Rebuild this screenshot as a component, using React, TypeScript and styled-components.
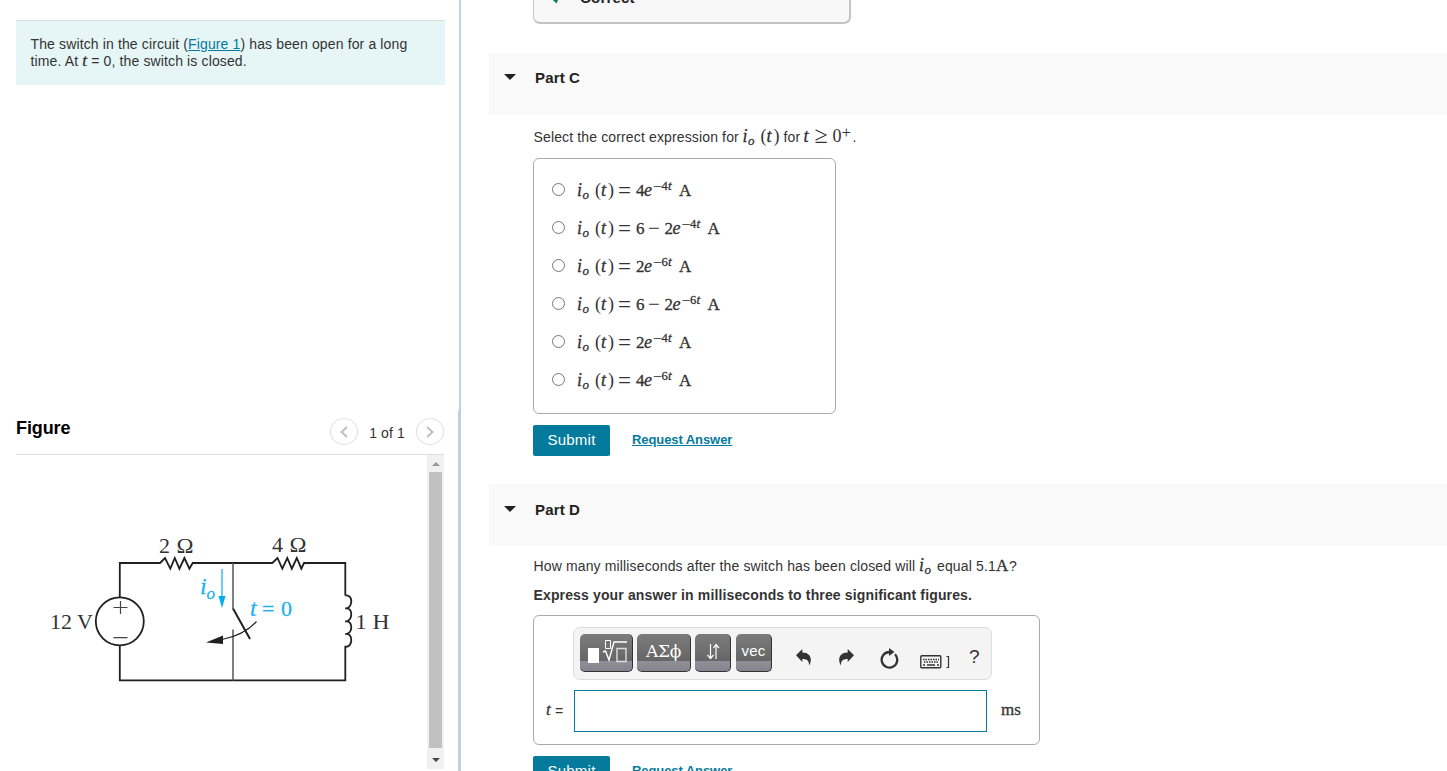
import { Fragment } from "react";
import { createGlobalStyle, styled } from "styled-components";

const GlobalStyle = createGlobalStyle`
  html,
  body {
    margin: 0;
    height: 771px;
    overflow: hidden;
    background: #fff;
  }
  * {
    box-sizing: border-box;
  }
`;

const Page = styled.div`
  display: flex;
  width: 1447px;
  height: 771px;
  overflow: hidden;
  font-family: "Liberation Sans", Arial, sans-serif;
  font-size: 14px;
  line-height: 17px;
  color: #333;
`;

const Left = styled.div`
  width: 461px;
  flex: none;
  display: flex;
  flex-direction: column;
`;

const IntroPane = styled.div`
  height: 411px;
  padding: 20px 14px 0 16px;
  border-right: 2px solid #bfcfde;
`;

const Intro = styled.div`
  height: 65px;
  padding: 15px 14px 0 14.5px;
  background: #e6f6f6;
  border-top: 1px solid #ddd;
  letter-spacing: 0.13px;
  white-space: nowrap;
`;

const Link = styled.a<{ $bold?: boolean }>`
  color: #047a9c;
  text-decoration: underline;
  font-weight: ${(p) => (p.$bold ? "bold" : "normal")};
`;

const FigurePane = styled.div`
  height: 360px;
  padding: 0 14px 0 16px;
  border-right: 3px solid #bfcfde;
`;

const FigureHeader = styled.div`
  display: flex;
  align-items: flex-start;
  height: 44px;
  border-bottom: 1px solid #ddd;
`;

const FigureTitle = styled.h2`
  flex: 1;
  margin: 7px 0 0;
  font-size: 18px;
  line-height: 20px;
  letter-spacing: -0.1px;
  color: #000;
`;

const Pager = styled.div`
  display: flex;
  align-items: center;
  margin-top: 7px;
`;

const PagerButton = styled.button`
  display: flex;
  align-items: center;
  justify-content: center;
  width: 28px;
  height: 27px;
  padding: 0 1px 0 0;
  border: 1px solid #e2e2e2;
  border-radius: 50%;
  background: #fff;
`;

const PagerText = styled.span`
  width: 58px;
  padding-top: 3px;
  text-align: center;
  letter-spacing: 0.1px;
`;

const FigureBody = styled.div`
  display: flex;
  height: 314px;
`;

const ScrollTrack = styled.div`
  display: flex;
  flex-direction: column;
  align-items: center;
  width: 17px;
  background: #f1f1f1;
`;

const ScrollThumb = styled.div`
  width: 13px;
  height: 276px;
  background: #c1c1c1;
`;

const ScrollArrow = styled.div<{ $down?: boolean }>`
  display: flex;
  align-items: center;
  justify-content: center;
  height: ${(p) => (p.$down ? 21 : 17)}px;
  padding-top: ${(p) => (p.$down ? 3 : 1)}px;
`;

const Right = styled.div`
  flex: 1;
  padding-left: 28px;
`;

const Correct = styled.div`
  display: flex;
  gap: 19px;
  align-items: flex-end;
  width: 318px;
  height: 24px;
  margin-left: 44px;
  padding: 0 0 16px 17px;
  border: solid #c4c4c4;
  border-width: 0 2px 2px 1px;
  border-radius: 0 0 7px 7px;
  background: #f8f8f8;
  font-size: 15px;
  font-weight: bold;
  letter-spacing: 0.2px;
  color: #222;
`;

const CheckMark = styled.svg`
  margin-bottom: 2px;
`;

const PartHeader = styled.div<{ $top: number }>`
  display: flex;
  align-items: flex-start;
  gap: 19px;
  height: 62px;
  margin-top: ${(p) => p.$top}px;
  padding: 16px 0 0 15px;
  background: #f9f9f9;
  font-size: 15px;
  font-weight: bold;
  letter-spacing: 0.15px;
  color: #222;
`;

const PartD = styled(PartHeader)`
  padding-top: 17px;
`;

const Caret = styled.span`
  margin-top: 5px;
  border: solid transparent;
  border-width: 6px 6px 0;
  border-top-color: #222;
`;

const Content = styled.div`
  padding-left: 44px;
`;

const Prompt = styled.div<{ $top: number }>`
  display: flex;
  align-items: baseline;
  height: 17px;
  margin-top: ${(p) => p.$top}px;
  padding-left: 0.5px;
  white-space: pre;
`;

const Run = styled.span<{ $w?: number; $bold?: boolean }>`
  width: ${(p) => (p.$w ? `${p.$w}px` : "auto")};
  font-weight: ${(p) => (p.$bold ? "bold" : "normal")};
  letter-spacing: 0.14px;
`;

/* line-height 0 keeps tall math symbols from moving the baseline */
const Glyph = styled.span<{ $w: number; $size?: number; $up?: number; $it?: boolean; $thin?: boolean }>`
  display: inline-block;
  flex: none;
  position: relative;
  bottom: ${(p) => p.$up ?? 0}px;
  width: ${(p) => p.$w}px;
  font-family: "Liberation Serif", "Times New Roman", serif;
  font-size: ${(p) => p.$size ?? 17}px;
  font-style: ${(p) => (p.$it ? "italic" : "normal")};
  letter-spacing: 0;
  line-height: 0;
  -webkit-text-stroke: ${(p) => (p.$thin ? 0 : 0.3)}px currentColor;
`;

const Choices = styled.div`
  display: flex;
  flex-direction: column;
  width: 303px;
  height: 256px;
  margin-top: 12px;
  padding: 12px 18px 0;
  border: 1px solid #aaa;
  border-radius: 6px;
`;

const Choice = styled.label`
  display: flex;
  align-items: center;
  height: 38px;
`;

const Radio = styled.input`
  width: 13px;
  height: 13px;
  margin: 0 12px 2px 0;
`;

const Equation = styled.span`
  display: flex;
  align-items: baseline;
  white-space: pre;
  height: 17px;
  padding-top: 1px;
  &::before {
    content: "\\200b";
    line-height: 17px;
  }
`;

const Actions = styled.div`
  display: flex;
  align-items: center;
  gap: 22px;
  margin-top: 11px;
  height: 31px;
`;

const Submit = styled.button`
  width: 77px;
  height: 31px;
  padding: 0 0 2px;
  border: 0;
  border-radius: 2px;
  background: #047a9c;
  color: #fff;
  font: 15px "Liberation Sans", Arial, sans-serif;
  letter-spacing: 0.25px;
`;

const Request = styled(Link)`
  margin-bottom: 2px;
  font-size: 13px;
  letter-spacing: -0.08px;
`;

const Editor = styled.div`
  width: 507px;
  height: 130px;
  margin-top: 11px;
  padding: 11px 16px 0 12px;
  border: 1px solid #aaa;
  border-radius: 6px;
`;

const Toolbar = styled.div`
  display: flex;
  align-items: center;
  width: 419px;
  height: 53px;
  margin-left: 27px;
  padding: 0 0 2px 6px;
  border: 1px solid #ddd;
  border-radius: 7px;
  background: #f4f4f4;
`;

const PaletteButton = styled.button<{ $w: number; $gap?: number; $sans?: boolean }>`
  display: flex;
  align-items: center;
  justify-content: center;
  width: ${(p) => p.$w}px;
  height: 38px;
  margin-right: ${(p) => p.$gap ?? 4}px;
  padding: ${(p) => (p.$sans ? "0 0 4px" : "0 0 2px")};
  border: 1px solid #333;
  border-width: 0 1px 1px 0;
  border-radius: 5px;
  background: linear-gradient(#7c7c7c, #666 72%, #908f99 73%, #85848d);
  color: #fff;
  font-family: ${(p) => (p.$sans ? '"Liberation Sans", sans-serif' : '"DejaVu Serif", serif')};
  font-size: ${(p) => (p.$sans ? 15 : 17)}px;
  letter-spacing: ${(p) => (p.$sans ? 0.3 : -0.3)}px;
`;

const IconGroup = styled.div`
  display: flex;
  align-items: flex-end;
  gap: 27px;
  padding-top: 11px;
`;

const IconSlot = styled.span<{ $raise?: number; $nudge?: number }>`
  display: flex;
  margin: 0 0 ${(p) => p.$raise ?? 0}px ${(p) => p.$nudge ?? 0}px;
`;

const Help = styled.span`
  margin: 8px 0 0 19px;
  font-size: 19px;
`;

const AnswerRow = styled.div`
  display: flex;
  align-items: center;
  margin-top: 10px;
`;

const AnswerInput = styled.input`
  width: 413px;
  height: 42px;
  margin-right: 14px;
  border: 1px solid #047a9c;
  outline: none;
`;

const choices = [
  { lead: "", coef: "4", rate: "4" },
  { lead: "6", coef: "2", rate: "4" },
  { lead: "", coef: "2", rate: "6" },
  { lead: "6", coef: "2", rate: "6" },
  { lead: "", coef: "2", rate: "4" },
  { lead: "", coef: "4", rate: "6" },
];

const Io = () => (
  <>
    <Glyph $w={5.5} $size={18} $it>i</Glyph>
    <Glyph $w={12.5} $size={13} $up={-3} $it>o</Glyph>
  </>
);

const OfT = () => (
  <>
    <Glyph $w={6} $size={18} $thin>(</Glyph>
    <Glyph $w={7} $size={18} $it>t</Glyph>
    <Glyph $w={10} $size={18} $thin>)</Glyph>
  </>
);

const Circuit = () => (
  <svg width="411" height="314" viewBox="16 455 411 314" fill="none" stroke="#231f20">
    <g strokeWidth="1.8">
      <path d="M119.8 597V563H160l1-1 4-4 5.3 10.7 4.5-10.7 4.6 10.7 5-10.7 5 10.7 3.3-5.7H272.3l5.2-5 4.8 10.7 5-10.7 4.5 10.7 5-10.7 4.5 10.7 2.7-5.7h41.3v32.5" />
      <path d="M345.3 595.5c8-1.5 8 13 0 13c8-2 8 13 0 13c8-2 8 13 0 12.6c8-2 8 13.5 0 12.6V680.3H119.8V646" />
      <circle cx="119.8" cy="621.3" r="24" />
      <path d="M233 608.5L250 639" strokeWidth="2" />
    </g>
    <path d="M233 563v46M233 629.5v51" stroke="#555" strokeWidth="1.5" />
    <path d="M113.5 607.5h14M120.5 601v13M113.5 637.7h14" stroke="#444" strokeWidth="1.2" />
    <path d="M256.5 621.5Q244 635 222 639.5" strokeWidth="1.2" />
    <path d="M206 642.5l17-7v8.5z" fill="#231f20" stroke="none" />
    <path d="M222 569v30" stroke="#5bc8f5" strokeWidth="1.8" />
    <path d="M218.5 596h7L222 608z" fill="#00aeef" stroke="none" />
    <g stroke="none" fill="#333" fontFamily="Liberation Serif" fontSize="22">
      <text x="159" y="553">2</text>
      <text x="176.5" y="553" textLength="17" lengthAdjust="spacingAndGlyphs">Ω</text>
      <text x="272" y="552">4</text>
      <text x="289.5" y="552" textLength="17" lengthAdjust="spacingAndGlyphs">Ω</text>
      <text x="50" y="629">12</text>
      <text x="77" y="629">V</text>
      <text x="355.5" y="628.5">1</text>
      <text x="372.5" y="628.5" textLength="17" lengthAdjust="spacingAndGlyphs">H</text>
    </g>
    <g fill="#1fb1f0" stroke="#1fb1f0" strokeWidth=".3" fontFamily="Liberation Serif" fontSize="22">
      <text x="200" y="594" fontStyle="italic" fontSize="24">i</text>
      <text x="206.5" y="599" fontStyle="italic" fontSize="17">o</text>
      <text x="250" y="616" fontStyle="italic" fontSize="24">t</text>
      <text x="262" y="616">=</text>
      <text x="281" y="616">0</text>
    </g>
  </svg>
);

const Chevron = ({ right }: { right?: boolean }) => (
  <svg width="8" height="12" viewBox="0 0 8 12" fill="none" stroke="#bbb" strokeWidth="1.8">
    <path d={right ? "M1 1l5.5 5L1 11" : "M7 1L1.5 6L7 11"} />
  </svg>
);

const TemplateIcon = () => (
  <svg width="42" height="26" viewBox="0 0 42 26" fill="none" stroke="#fff">
    <path d="M3 10h11v15H3z" fill="#fff" stroke="none" />
    <path d="M20.5 2.5h5v8h-5z" />
    <path d="M18 14l2.5-1 3.5 9L29 4h13" strokeWidth="1.4" />
    <path d="M32 10.5h9v13h-9z" stroke="#ddd" strokeWidth="1.4" />
  </svg>
);

const SwapIcon = () => (
  <svg width="14" height="18" viewBox="0 0 14 18" fill="none" stroke="#fff" strokeWidth="1.2">
    <path d="M4.5 2v14M1.5 13l3 3.5 3-3.5M10 17V3M7.5 6L10 2.5l3 3.5" />
  </svg>
);

const CurvedArrow = ({ flip }: { flip?: boolean }) => (
  <svg width="15" height="17" viewBox="0 0 15 17" fill="#333">
    <path
      transform={flip ? "matrix(-1 0 0 1 15 0)" : undefined}
      d="M0 6.3L6.3 0v3.5C12 3.5 15 7 14.8 11c-.1 2.3-.7 4-1.8 5.5c.3-4.500-1.700-6.500-6.700-6.500V13z"
    />
  </svg>
);

const ResetIcon = () => (
  <svg width="19" height="21" viewBox="0 0 19 21" fill="none" stroke="#333" strokeWidth="2.3">
    <path d="M15 6.3A7.8 7.8 0 1 1 9.5 4" />
    <path d="M9 0l5.5 4L9 8z" fill="#333" stroke="none" />
  </svg>
);

const KeyboardIcon = () => (
  <svg width="30" height="14" viewBox="0 0 30 14" fill="none" stroke="#333">
    <rect x=".8" y=".8" width="20" height="12" rx="1" strokeWidth="1.4" />
    <path d="M3 4.5h16M4 7h15" strokeWidth="1.6" strokeDasharray="1.5 1" />
    <path d="M3 10h2M7 10h8M17 10h2" strokeWidth="1.5" />
    <path d="M26.5 1.5h2v11h-2" strokeWidth="1.2" />
  </svg>
);

const ToolIcons = () => (
  <IconGroup>
    <IconSlot $raise={3}><CurvedArrow /></IconSlot>
    <IconSlot $raise={3} $nudge={1}><CurvedArrow flip /></IconSlot>
    <IconSlot $nudge={-1}><ResetIcon /></IconSlot>
    <IconSlot $nudge={-6}><KeyboardIcon /></IconSlot>
  </IconGroup>
);

const App = () => (
  <>
    <GlobalStyle />
    <Page>
      <Left>
        <IntroPane>
          <Intro>
            The switch in the circuit (<Link>Figure 1</Link>) has been open for a long
            <br />
            time. At <Glyph $w={5} $size={17} $it>t</Glyph> = 0, the switch is closed.
          </Intro>
        </IntroPane>
        <FigurePane>
          <FigureHeader>
            <FigureTitle>Figure</FigureTitle>
            <Pager>
              <PagerButton><Chevron /></PagerButton>
              <PagerText>1 of 1</PagerText>
              <PagerButton><Chevron right /></PagerButton>
            </Pager>
          </FigureHeader>
          <FigureBody>
            <Circuit />
            <ScrollTrack>
              <ScrollArrow>
                <svg width="8" height="4"><path d="M4 0l4 4H0z" fill="#999" /></svg>
              </ScrollArrow>
              <ScrollThumb />
              <ScrollArrow $down>
                <svg width="8" height="4"><path d="M0 0h8L4 4z" fill="#444" /></svg>
              </ScrollArrow>
            </ScrollTrack>
          </FigureBody>
        </FigurePane>
      </Left>

      <Right>
        <Correct>
          <CheckMark width="10" height="12" viewBox="0 0 10 12" fill="none" stroke="#0b8542" strokeWidth="3">
            <path d="M1 5l4 4 4-9" />
          </CheckMark>
          Correct
        </Correct>

        <PartHeader $top={29}>
          <Caret />
          Part C
        </PartHeader>
        <Content>
          <Prompt $top={14}>
            <Run $w={209}>Select the correct expression for </Run>
            <Io />
            <OfT />
            <Run $w={20}>for </Run>
            <Glyph $w={11} $size={18} $it>t</Glyph>
            <Glyph $w={18} $size={24} $up={-1} $thin>≥</Glyph>
            <Glyph $w={9} $size={18} $thin>0</Glyph>
            <Glyph $w={11} $size={17} $up={4} $thin>+</Glyph>
            <Run>.</Run>
          </Prompt>
          <Choices>
            {choices.map(({ lead, coef, rate }, index) => (
              <Choice key={index}>
                <Radio type="radio" name="expression" />
                <Equation>
                  <Io />
                  <OfT />
                  <Glyph $w={18} $size={23} $up={-2} $thin>=</Glyph>
                  {lead && (
                    <Fragment>
                      <Glyph $w={12}>{lead}</Glyph>
                      <Glyph $w={16.5} $size={21} $up={-1} $thin>−</Glyph>
                    </Fragment>
                  )}
                  <Glyph $w={8}>{coef}</Glyph>
                  <Glyph $w={9} $size={18} $it>e</Glyph>
                  <Glyph $w={8.5} $size={16} $up={4} $thin>−</Glyph>
                  <Glyph $w={6.5} $size={12.5} $up={6}>{rate}</Glyph>
                  <Glyph $w={11} $size={13} $up={6} $it>t</Glyph>
                  <Glyph $w={12}>A</Glyph>
                </Equation>
              </Choice>
            ))}
          </Choices>
          <Actions>
            <Submit>Submit</Submit>
            <Request $bold>Request Answer</Request>
          </Actions>
        </Content>

        <PartD $top={28}>
          <Caret />
          Part D
        </PartD>
        <Content>
          <Prompt $top={12}>
            <Run $w={385.5}>How many milliseconds after the switch has been closed will </Run>
            <Io />
            <Run $w={59}>equal 5.1</Run>
            <Glyph $w={13}>A</Glyph>
            <Run>?</Run>
          </Prompt>
          <Prompt $top={12}>
            <Run $bold>Express your answer in milliseconds to three significant figures.</Run>
          </Prompt>
          <Editor>
            <Toolbar>
              <PaletteButton $w={53}><TemplateIcon /></PaletteButton>
              <PaletteButton $w={54}>ΑΣϕ</PaletteButton>
              <PaletteButton $w={36} $gap={5}><SwapIcon /></PaletteButton>
              <PaletteButton $w={36} $gap={24} $sans>vec</PaletteButton>
              <ToolIcons />
              <Help>?</Help>
            </Toolbar>
            <AnswerRow>
              <Glyph $w={9} $size={17} $up={1} $it>t</Glyph>
              <Run $w={19}>=</Run>
              <AnswerInput />
              <Glyph $w={22} $up={1}>ms</Glyph>
            </AnswerRow>
          </Editor>
          <Actions>
            <Submit>Submit</Submit>
            <Request $bold>Request Answer</Request>
          </Actions>
        </Content>
      </Right>
    </Page>
  </>
);

export default App;
